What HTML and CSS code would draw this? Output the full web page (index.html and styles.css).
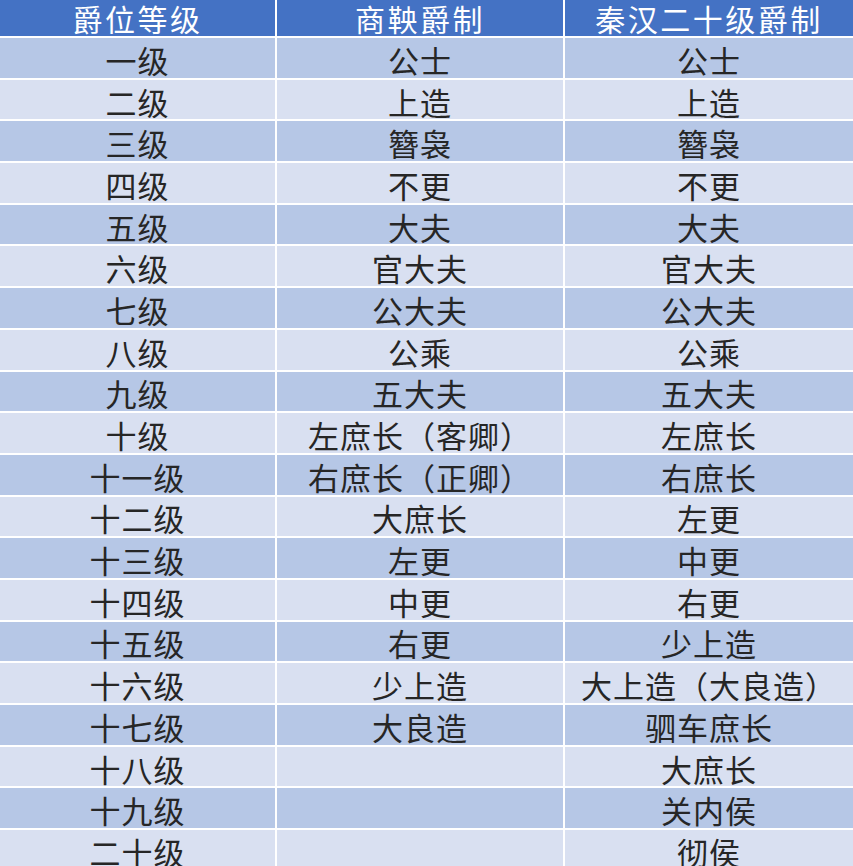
FILE: index.html
```html
<!DOCTYPE html>
<html lang="zh">
<head>
<meta charset="utf-8">
<title>爵位等级</title>
<link rel="stylesheet" href="styles.css">
</head>
<body>
<div class="table">
  <div class="cell head">爵位等级</div><div class="cell head">商鞅爵制</div><div class="cell head">秦汉二十级爵制</div>
  <div class="cell odd">一级</div><div class="cell odd">公士</div><div class="cell odd">公士</div>
  <div class="cell even">二级</div><div class="cell even">上造</div><div class="cell even">上造</div>
  <div class="cell odd">三级</div><div class="cell odd">簪袅</div><div class="cell odd">簪袅</div>
  <div class="cell even">四级</div><div class="cell even">不更</div><div class="cell even">不更</div>
  <div class="cell odd">五级</div><div class="cell odd">大夫</div><div class="cell odd">大夫</div>
  <div class="cell even">六级</div><div class="cell even">官大夫</div><div class="cell even">官大夫</div>
  <div class="cell odd">七级</div><div class="cell odd">公大夫</div><div class="cell odd">公大夫</div>
  <div class="cell even">八级</div><div class="cell even">公乘</div><div class="cell even">公乘</div>
  <div class="cell odd">九级</div><div class="cell odd">五大夫</div><div class="cell odd">五大夫</div>
  <div class="cell even">十级</div><div class="cell even">左庶长（客卿）</div><div class="cell even">左庶长</div>
  <div class="cell odd">十一级</div><div class="cell odd">右庶长（正卿）</div><div class="cell odd">右庶长</div>
  <div class="cell even">十二级</div><div class="cell even">大庶长</div><div class="cell even">左更</div>
  <div class="cell odd">十三级</div><div class="cell odd">左更</div><div class="cell odd">中更</div>
  <div class="cell even">十四级</div><div class="cell even">中更</div><div class="cell even">右更</div>
  <div class="cell odd">十五级</div><div class="cell odd">右更</div><div class="cell odd">少上造</div>
  <div class="cell even">十六级</div><div class="cell even">少上造</div><div class="cell even">大上造（大良造）</div>
  <div class="cell odd">十七级</div><div class="cell odd">大良造</div><div class="cell odd">驷车庶长</div>
  <div class="cell even">十八级</div><div class="cell even"></div><div class="cell even">大庶长</div>
  <div class="cell odd">十九级</div><div class="cell odd"></div><div class="cell odd">关内侯</div>
  <div class="cell even">二十级</div><div class="cell even"></div><div class="cell even">彻侯</div>
</div>
</body>
</html>
```
FILE: styles.css
```css
html, body {
  margin: 0;
  padding: 0;
  background: #ffffff;
}
body {
  overflow: hidden;
  font-family: "Noto Sans CJK SC", "Noto Sans", sans-serif;
}
.table {
  display: grid;
  grid-template-columns: 275px 286px 1fr;
  grid-template-rows: 36px;
  grid-auto-rows: 39.7px;
  gap: 2px;
  width: 853px;
  background: #ffffff;
}
.cell {
  display: flex;
  align-items: center;
  justify-content: center;
  font-size: 31px;
  line-height: 1;
  letter-spacing: 1px;
  color: #262626;
  white-space: nowrap;
  padding-top: 3px;
}
.head {
  background: #4472c4;
  color: #ffffff;
  font-size: 30px;
  line-height: 36px;
  padding-top: 0;
  letter-spacing: 2.5px;
}
.odd {
  background: #b6c7e6;
}
.even {
  background: #d9e0f1;
}
```
